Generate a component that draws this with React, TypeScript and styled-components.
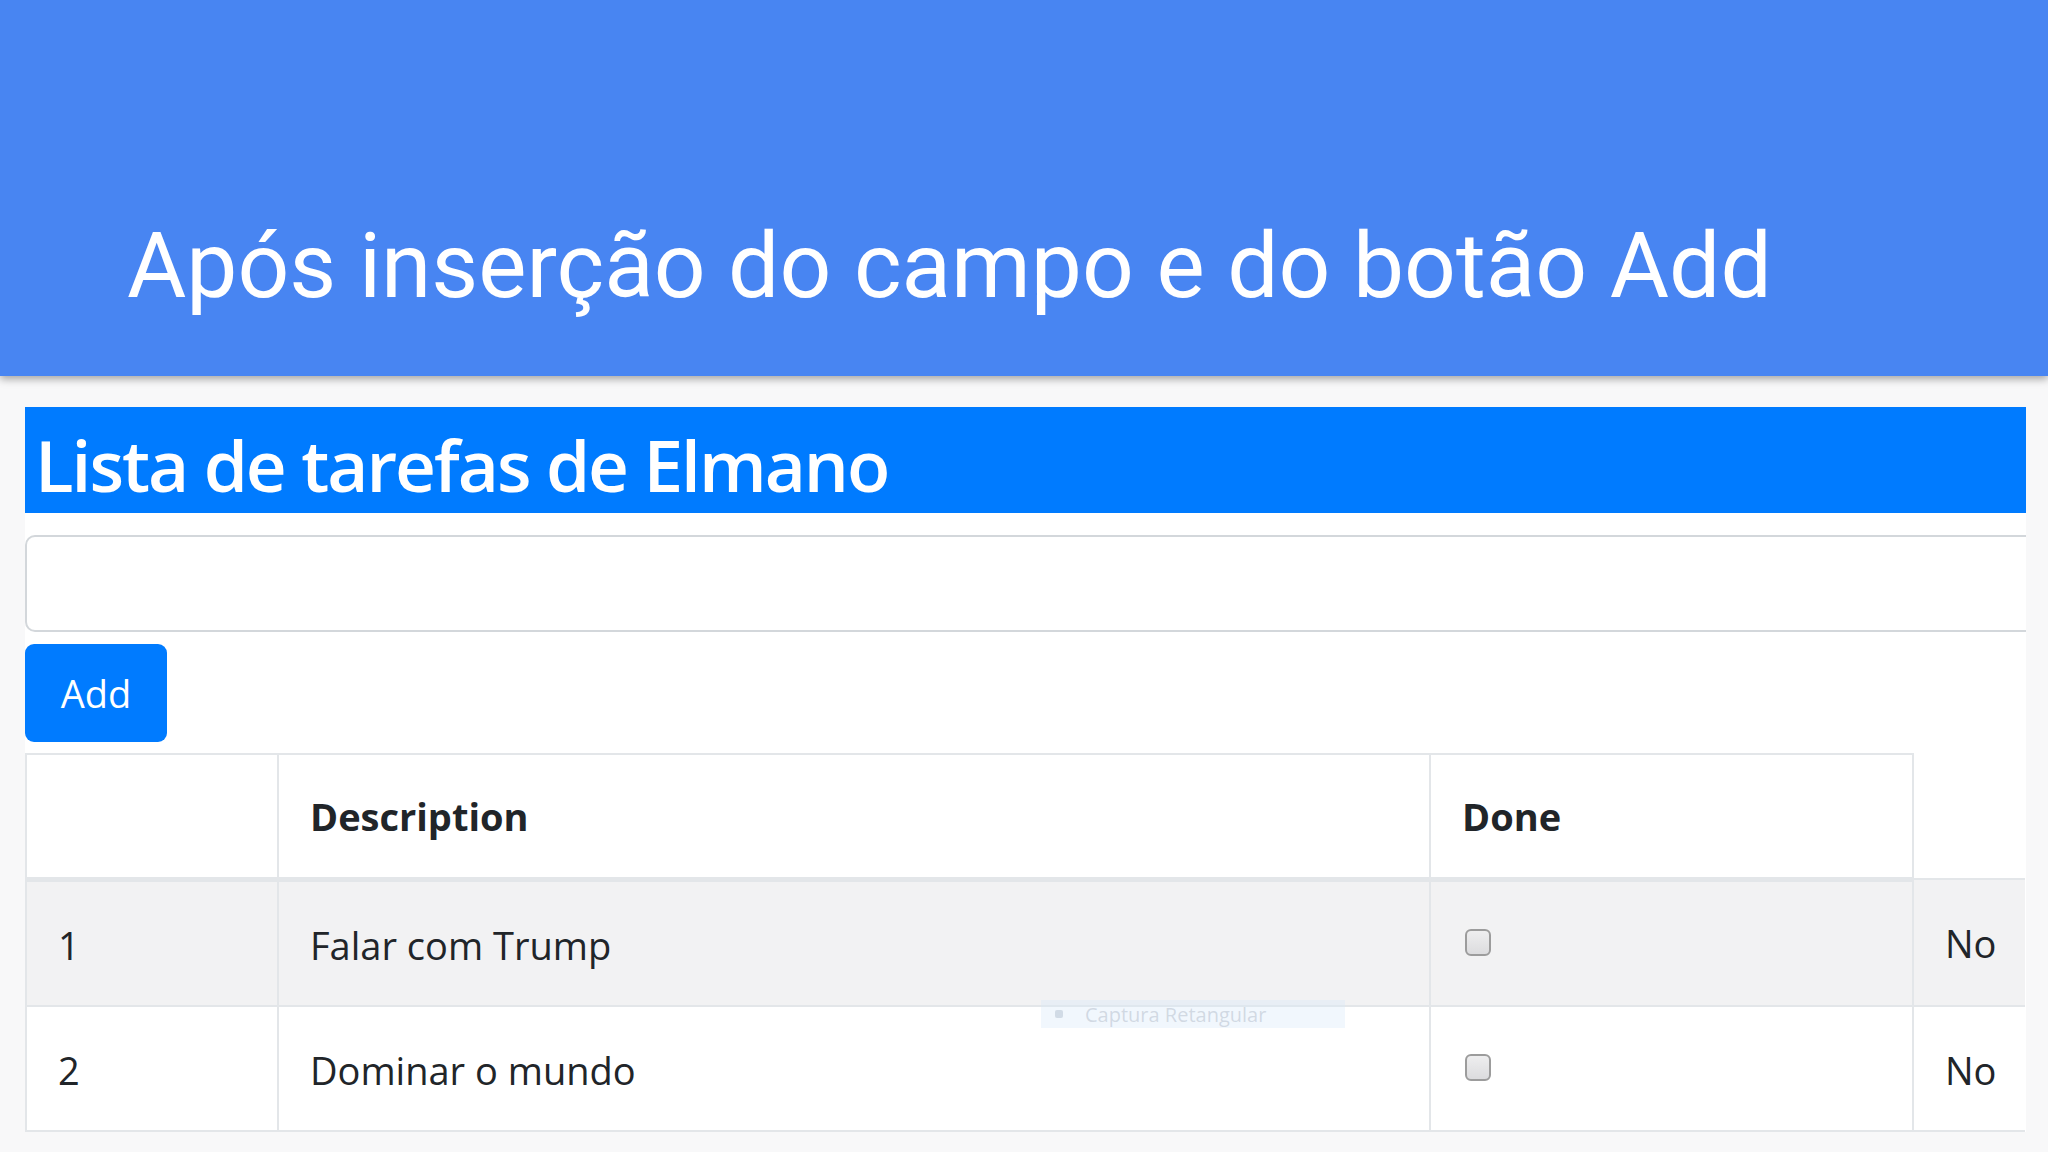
import React from 'react';
import styled, { createGlobalStyle } from 'styled-components';

const GlobalStyle = createGlobalStyle`
  html, body {
    margin: 0;
    padding: 0;
    background: #f8f8f9;
  }
  * {
    box-sizing: border-box;
  }
`;

const Slide = styled.div`
  width: 2048px;
  height: 1152px;
  overflow: hidden;
  display: flex;
  flex-direction: column;
  background: #f8f8f9;
`;

const SlideHeader = styled.header`
  height: 376px;
  flex: none;
  background: #4885f2;
  padding: 211px 0 0 127px;
  box-shadow: 0 3px 8px rgba(0, 0, 0, 0.35);
  position: relative;
  z-index: 1;
`;

const SlideTitle = styled.h1`
  margin: 0;
  font-family: Roboto, "Liberation Sans", sans-serif;
  font-weight: 400;
  font-size: 91px;
  line-height: 110px;
  color: #ffffff;
`;

const Shot = styled.div`
  margin: 31px 22px 0 25px;
  background: #ffffff;
  overflow: hidden;
  position: relative;
  font-family: "Open Sans", "Noto Sans", sans-serif;
  color: #212529;
`;

const ListTitle = styled.h2`
  margin: 0;
  height: 106px;
  background: #007bff;
  color: #ffffff;
  font-weight: 600;
  font-size: 71px;
  line-height: 106px;
  padding: 5px 0 0 10px;
  letter-spacing: -2px;
`;

const TaskInput = styled.input`
  display: block;
  margin-top: 22px;
  width: calc(100% + 30px);
  height: 97px;
  border: 2px solid #d3d7db;
  border-radius: 10px;
  background: #ffffff;
  font-family: inherit;
  font-size: 41px;
  padding: 0 31px;
  outline: none;
`;

const AddButton = styled.button`
  display: block;
  margin-top: 12px;
  width: 142px;
  height: 98px;
  border: none;
  border-radius: 9px;
  background: #007bff;
  color: #ffffff;
  font-family: inherit;
  font-size: 38px;
  padding: 0 0 1px;
  cursor: pointer;
`;

const Table = styled.table`
  margin-top: 11px;
  width: 1999px;
  border-collapse: collapse;
  table-layout: fixed;
  font-size: 38px;
`;

const HeadCell = styled.th`
  text-align: left;
  font-weight: 700;
  padding: 31px 31px;
  height: 125px;
  line-height: 58px;
  border: 2px solid #e3e6e9;
  border-bottom-width: 5px;
  vertical-align: middle;
`;

const BodyRow = styled.tr<{ $striped?: boolean }>`
  background: ${(p) => (p.$striped ? '#f2f2f3' : '#ffffff')};
`;

const Cell = styled.td`
  padding: 33px 31px 29px;
  height: 125px;
  line-height: 61px;
  border: 2px solid #e3e6e9;
  vertical-align: top;
  color: #212529;
`;

const EdgeCell = styled(Cell)`
  border-right: none;
  padding-right: 0;
`;

const Check = styled.span`
  display: inline-block;
  margin: 14px 0 0 3px;
  width: 26px;
  height: 27px;
  border: 2px solid #9c9c9c;
  border-radius: 6px;
  background: linear-gradient(#eeeeef, #dcdcde);
  vertical-align: top;
`;

const Ghost = styled.div`
  position: absolute;
  left: 1016px;
  top: 593px;
  width: 304px;
  height: 28px;
  background: rgba(214, 232, 250, 0.35);
  display: flex;
  align-items: center;
  gap: 22px;
  padding-left: 14px;
  font-family: "Open Sans", sans-serif;
  font-size: 20px;
  color: rgba(170, 180, 195, 0.45);
  pointer-events: none;
`;

const GhostDot = styled.span`
  width: 8px;
  height: 8px;
  border-radius: 2px;
  background: rgba(150, 165, 185, 0.35);
`;

const tasks = [
  { id: 1, description: 'Falar com Trump', done: false },
  { id: 2, description: 'Dominar o mundo', done: false },
];

export default function App() {
  return (
    <>
      <GlobalStyle />
      <Slide>
        <SlideHeader>
          <SlideTitle>Após inserção do campo e do botão Add</SlideTitle>
        </SlideHeader>
        <Shot>
          <ListTitle>Lista de tarefas de Elmano</ListTitle>
          <TaskInput type="text" />
          <AddButton>Add</AddButton>
          <Table>
            <colgroup>
              <col style={{ width: 252 }} />
              <col style={{ width: 1152 }} />
              <col style={{ width: 483 }} />
              <col style={{ width: 112 }} />
            </colgroup>
            <thead>
              <tr>
                <HeadCell></HeadCell>
                <HeadCell>Description</HeadCell>
                <HeadCell>Done</HeadCell>
              </tr>
            </thead>
            <tbody>
              {tasks.map((t, i) => (
                <BodyRow key={t.id} $striped={i % 2 === 0}>
                  <Cell>{t.id}</Cell>
                  <Cell>{t.description}</Cell>
                  <Cell>
                    <Check />
                  </Cell>
                  <EdgeCell>{t.done ? 'Yes' : 'No'}</EdgeCell>
                </BodyRow>
              ))}
            </tbody>
          </Table>
          <Ghost>
            <GhostDot />
            Captura Retangular
          </Ghost>
        </Shot>
      </Slide>
    </>
  );
}
